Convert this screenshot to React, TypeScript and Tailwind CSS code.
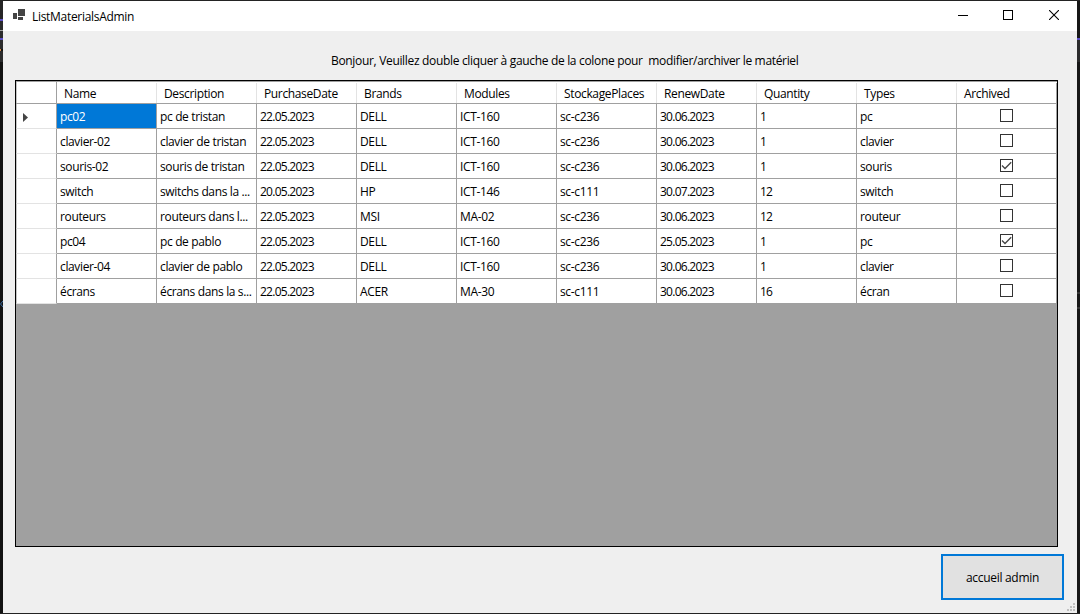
import React from "react";

type Row = { cells: string[]; archived: boolean };

const columns = ["Name", "Description", "PurchaseDate", "Brands", "Modules", "StockagePlaces", "RenewDate", "Quantity", "Types", "Archived"];

const rows: Row[] = [
  { cells: ["pc02", "pc de tristan", "22.05.2023", "DELL", "ICT-160", "sc-c236", "30.06.2023", "1", "pc"], archived: false },
  { cells: ["clavier-02", "clavier de tristan", "22.05.2023", "DELL", "ICT-160", "sc-c236", "30.06.2023", "1", "clavier"], archived: false },
  { cells: ["souris-02", "souris de tristan", "22.05.2023", "DELL", "ICT-160", "sc-c236", "30.06.2023", "1", "souris"], archived: true },
  { cells: ["switch", "switchs dans la ...", "20.05.2023", "HP", "ICT-146", "sc-c111", "30.07.2023", "12", "switch"], archived: false },
  { cells: ["routeurs", "routeurs dans l...", "22.05.2023", "MSI", "MA-02", "sc-c236", "30.06.2023", "12", "routeur"], archived: false },
  { cells: ["pc04", "pc de pablo", "22.05.2023", "DELL", "ICT-160", "sc-c236", "25.05.2023", "1", "pc"], archived: true },
  { cells: ["clavier-04", "clavier de pablo", "22.05.2023", "DELL", "ICT-160", "sc-c236", "30.06.2023", "1", "clavier"], archived: false },
  { cells: ["écrans", "écrans dans la s...", "22.05.2023", "ACER", "MA-30", "sc-c111", "30.06.2023", "16", "écran"], archived: false },
];

function CheckBox({ checked }: { checked: boolean }) {
  return (
    <span className="block size-[13px] border border-[#333333] bg-white">
      {checked && (
        <svg viewBox="0 0 11 11" className="size-[11px]" fill="none" stroke="#444" strokeWidth="1.3">
          <path d="M1 5.5 4 8.5 10.2 2.3" />
        </svg>
      )}
    </span>
  );
}

function TitleBar() {
  return (
    <header className="flex h-[30px] items-center bg-white">
      <svg viewBox="0 0 12 11" className="mb-[3px] ml-[10px] h-[11px] w-3" fill="#444444" shapeRendering="crispEdges">
        <path d="M0 4h4v6H0zM5 0h7v7H5zM5 8h5v3H5z" />
      </svg>
      <h1 className="mt-px ml-[7px] text-[12px] tracking-[-0.3px]">ListMaterialsAdmin</h1>
      <div className="ml-auto flex items-center pr-[18px]">
        <svg viewBox="0 0 10 11" className="mr-[35px] mb-px h-[11px] w-[10px]" stroke="#000" shapeRendering="crispEdges">
          <path d="M0 5.5h10" />
        </svg>
        <svg viewBox="0 0 10 10" className="mr-9 mb-[2px] size-[10px]" fill="none" stroke="#000" shapeRendering="crispEdges">
          <path d="M.5.5h9v9h-9z" />
        </svg>
        <svg viewBox="0 0 10 10" className="mb-[2px] size-[10px]" stroke="#000" strokeWidth="1.1">
          <path d="m0 0 10 10M10 0 0 10" />
        </svg>
      </div>
    </header>
  );
}

function LeftEdge() {
  return (
    <div className="flex w-[3px] flex-col bg-[#121212]">
      <div className="h-[18px] bg-[#252526]" />
      <div className="h-[2px] bg-[#5c4fc4]" />
      <div className="h-[9px] bg-[#2b2b2c]" />
      <div className="h-px bg-[#a0a0a0]" />
      <div className="h-[7px] bg-[#2b2b2c]" />
      <div className="h-[2px] bg-[#5c4fc4]" />
      <div className="h-[9px] bg-[#2b2b2c]" />
      <div className="h-[2px] w-px bg-[#d08a4a]" />
      <div className="h-[11px] bg-[#2b2b2c]" />
      <svg viewBox="0 0 3 8" className="mt-[238px] h-2 w-[3px]" fill="none" stroke="#3a6ea5">
        <path d="M3 1 .5 4 3 7" />
      </svg>
    </div>
  );
}

function RightEdge() {
  return (
    <div className="flex w-[3px] flex-col bg-[#171717]">
      <div className="h-[37px]" />
      <div className="h-[2px] bg-[#5c4fc4]" />
      <div className="h-[22px] bg-[#2b2b2c]" />
      <div className="mt-[230px] h-[2px] bg-[#363636]" />
      <div className="mt-[13px] h-[2px] bg-[#363636]" />
    </div>
  );
}

export default function App() {
  return (
    <div className="flex h-[614px] w-[1080px] border-y border-[#232323] font-['Open_Sans','Noto_Sans',sans-serif] text-[12px] leading-4 tracking-[-0.36px] text-black">
      <LeftEdge />
      <main className="flex h-[612px] w-[1074px] flex-col bg-[#efefef]">
        <TitleBar />
        <p className="mt-[22px] ml-[328px] tracking-[-0.325px] whitespace-pre">Bonjour, Veuillez double cliquer à gauche de la colone pour  modifier/archiver le matériel</p>
        <div className="mt-[11px] ml-3 h-[467px] w-[1043px] shrink-0 border border-black bg-[#a0a0a0]">
          <div className="flex h-[23px] border-t border-b border-[#a0a0a0] bg-white">
            <div className="w-[41px] border-x border-[#a0a0a0] border-l-[#c4c4c4]" />
            {columns.map((c) => (
              <div key={c} className="mt-px flex w-[100px] items-center border-r border-[#e3e3e3] pt-px pl-[7px] last:border-[#a0a0a0]">{c}</div>
            ))}
          </div>
          {rows.map((row, i) => (
            <div key={i} className="flex h-[25px] bg-white">
              <div className="flex w-[41px] items-center border-x border-b border-[#a0a0a0] border-b-[#e3e3e3] border-l-[#c4c4c4] pt-[2px] pl-[6px]">
                {i === 0 && (
                  <svg viewBox="0 0 5 9" className="h-[9px] w-[5px]" fill="#444">
                    <path d="M0 0 5 4.5 0 9z" />
                  </svg>
                )}
              </div>
              {row.cells.map((cell, j) => (
                <div key={j} className={`flex w-[100px] items-center border-r border-b border-[#a0a0a0] pt-[2px] pl-[3px] whitespace-nowrap ${i === 0 && j === 0 ? "bg-[#0078d7] text-white" : ""}`}>
                  <span className={/^\d/.test(cell) ? "tracking-[-0.74px]" : ""}>{cell}</span>
                </div>
              ))}
              <div className="flex w-[100px] items-center justify-center border-r border-b border-[#a0a0a0] pb-[2px]">
                <CheckBox checked={row.archived} />
              </div>
            </div>
          ))}
        </div>
        <div className="mt-[7px] flex">
          <button className="ml-[938px] h-[46px] w-[123px] shrink-0 border-2 border-[#0078d7] bg-[#e1e1e1] pt-px tracking-[-0.3px]">accueil admin</button>
          <svg viewBox="0 0 8 8" className="mt-[49px] ml-[3px] size-2 shrink-0" fill="#bfbfbf" shapeRendering="crispEdges">
            <path d="M6 0h2v2H6zM3 3h2v2H3zM6 3h2v2H6zM0 6h2v2H0zM3 6h2v2H3zM6 6h2v2H6z" />
          </svg>
        </div>
      </main>
      <RightEdge />
    </div>
  );
}
